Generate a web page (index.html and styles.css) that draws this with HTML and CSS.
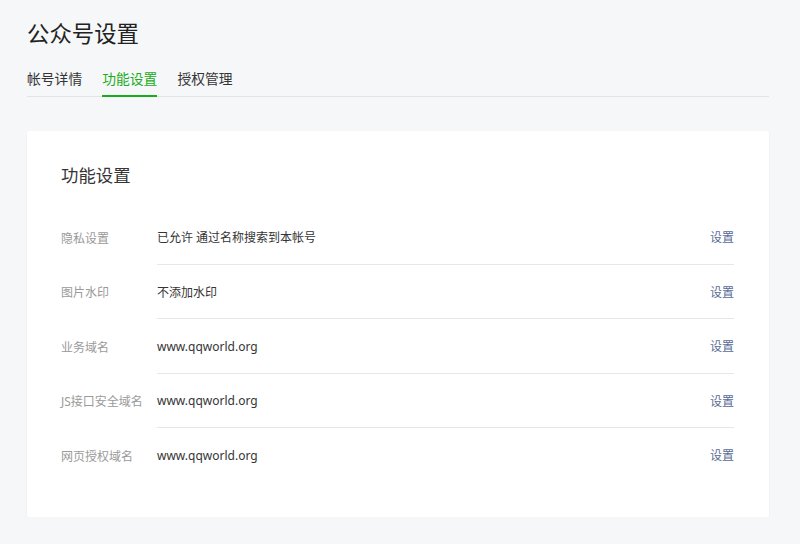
FILE: index.html
```html
<!DOCTYPE html>
<html lang="zh-CN">
<head>
<meta charset="utf-8">
<title>公众号设置</title>
<link rel="stylesheet" href="styles.css">
</head>
<body>
<div class="page">
  <h1 class="page-title">公众号设置</h1>
  <nav class="tabs">
    <a class="tab">帐号详情</a>
    <a class="tab active">功能设置</a>
    <a class="tab">授权管理</a>
  </nav>
  <section class="card">
    <h2 class="card-title">功能设置</h2>
    <div class="rows">
      <div class="row">
        <div class="label">隐私设置</div>
        <div class="main"><span class="value">已允许 通过名称搜索到本帐号</span><a class="action">设置</a></div>
      </div>
      <div class="row">
        <div class="label">图片水印</div>
        <div class="main"><span class="value">不添加水印</span><a class="action">设置</a></div>
      </div>
      <div class="row">
        <div class="label">业务域名</div>
        <div class="main"><span class="value">www.qqworld.org</span><a class="action">设置</a></div>
      </div>
      <div class="row">
        <div class="label">JS接口安全域名</div>
        <div class="main"><span class="value">www.qqworld.org</span><a class="action">设置</a></div>
      </div>
      <div class="row">
        <div class="label">网页授权域名</div>
        <div class="main"><span class="value">www.qqworld.org</span><a class="action">设置</a></div>
      </div>
    </div>
  </section>
</div>
</body>
</html>
```
FILE: styles.css
```css
* { box-sizing: border-box; }
html, body {
  margin: 0;
  padding: 0;
  background: #f6f7f9;
  font-family: "Noto Sans", "Noto Sans CJK SC", sans-serif;
  color: #353535;
}
.page {
  width: 742px;
  margin-left: 27px;
  padding-top: 19px;
}
.page-title {
  margin: 0;
  font-size: 22.4px;
  line-height: 30px;
  font-weight: 400;
  color: #222;
}
.tabs {
  display: flex;
  gap: 20px;
  margin-top: 16px;
  border-bottom: 1px solid #e2e4e8;
}
.tab {
  position: relative;
  font-size: 13.8px;
  line-height: 28px;
  padding-bottom: 3px;
  color: #353535;
  cursor: pointer;
}
.tab.active { color: #1aad19; }
.tab.active::after {
  content: "";
  position: absolute;
  left: 0;
  right: 0;
  bottom: -1px;
  height: 2px;
  background: #1aad19;
}
.card {
  margin-top: 34px;
  background: #fff;
  border-radius: 2px;
  box-shadow: 0 1px 3px rgba(0,0,0,0.05);
  padding: 32px 35px 34px 34px;
}
.card-title {
  margin: 0;
  font-size: 17.4px;
  line-height: 24px;
  font-weight: 400;
  color: #353535;
}
.rows { margin-top: 23.4px; }
.row {
  display: flex;
  height: 54.5px;
  font-size: 12px;
}
.label {
  width: 96px;
  flex: none;
  display: flex;
  align-items: center;
  color: #9a9a9a;
  white-space: nowrap;
}
.main {
  flex: 1;
  display: flex;
  align-items: center;
  justify-content: space-between;
  border-bottom: 1px solid #e7e7eb;
}
.row:last-child .main { border-bottom-color: transparent; }
.value { color: #353535; }
.action { color: #576b95; cursor: pointer; }
```
